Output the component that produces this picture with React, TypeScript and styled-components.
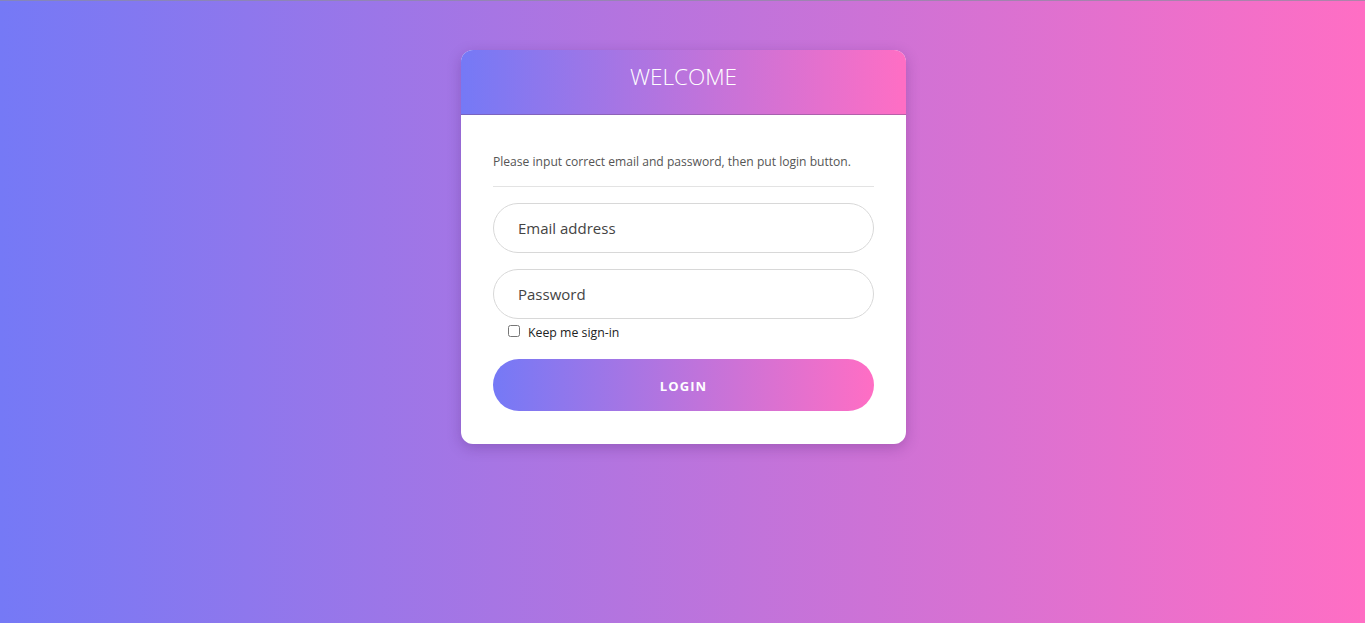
import React from "react";
import styled, { createGlobalStyle } from "styled-components";

const Global = createGlobalStyle`
  html, body { margin: 0; padding: 0; }
  body {
    font-family: "Open Sans", "Noto Sans", sans-serif;
    background: linear-gradient(to right, #7579f6, #ff6ec4);
    min-height: 623px;
  }
  * { box-sizing: border-box; }
`;

const Page = styled.div`
  min-height: 623px;
  border-top: 1px solid rgba(140, 140, 160, 0.7);
  display: flex;
  justify-content: center;
  align-items: flex-start;
  padding-top: 49px;
  padding-left: 2px;
`;

const Card = styled.div`
  width: 445px;
  background: #fff;
  border-radius: 12px;
  overflow: hidden;
  box-shadow: 0 4px 14px rgba(60, 20, 90, 0.25);
`;

const Header = styled.div`
  height: 65px;
  background: linear-gradient(to right, #7579f6, #ff6ec4);
  border-bottom: 1px solid rgba(120, 80, 140, 0.5);
  display: flex;
  justify-content: center;
  padding-top: 12px;
`;

const Title = styled.h1`
  margin: 0;
  color: #fff;
  font-weight: 300;
  font-size: 22.5px;
  line-height: 30px;
`;

const Body = styled.div`
  padding: 38px 32px 33px;
  display: flex;
  flex-direction: column;
`;

const Intro = styled.p`
  margin: 0;
  font-size: 12.1px;
  line-height: 18px;
  color: #555;
  padding-bottom: 15px;
  border-bottom: 1px solid #e3e3e3;
`;

const Input = styled.input`
  width: 100%;
  height: 50px;
  border: 1px solid #d8d8d8;
  border-radius: 25px;
  padding: 0 24px;
  font-family: "Open Sans", "Noto Sans", sans-serif;
  font-size: 15px;
  color: #333;
  margin-top: ${(p: { $gap: number }) => p.$gap}px;
  outline: none;
  &::placeholder { color: #444; }
`;

const CheckRow = styled.label`
  display: flex;
  align-items: center;
  gap: 8px;
  padding-left: 15px;
  margin-top: 4px;
  font-size: 12.3px;
  color: #222;
  height: 18px;
`;

const Check = styled.input`
  margin: 0;
  width: 12px;
  height: 12px;
  position: relative;
  top: -1px;
`;

const Button = styled.button`
  margin-top: 18px;
  height: 52px;
  width: 100%;
  border: none;
  border-radius: 26px;
  padding-top: 2px;
  background: linear-gradient(to right, #7579f6, #ff6ec4);
  color: #fff;
  font-family: "Open Sans", "Noto Sans", sans-serif;
  font-weight: 700;
  font-size: 13px;
  letter-spacing: 1.1px;
  cursor: pointer;
`;

export default function App() {
  return (
    <>
      <Global />
      <Page>
        <Card>
          <Header>
            <Title>WELCOME</Title>
          </Header>
          <Body>
            <Intro>Please input correct email and password, then put login button.</Intro>
            <Input $gap={16} type="email" placeholder="Email address" />
            <Input $gap={16} type="password" placeholder="Password" />
            <CheckRow>
              <Check type="checkbox" />
              Keep me sign-in
            </CheckRow>
            <Button>LOGIN</Button>
          </Body>
        </Card>
      </Page>
    </>
  );
}
